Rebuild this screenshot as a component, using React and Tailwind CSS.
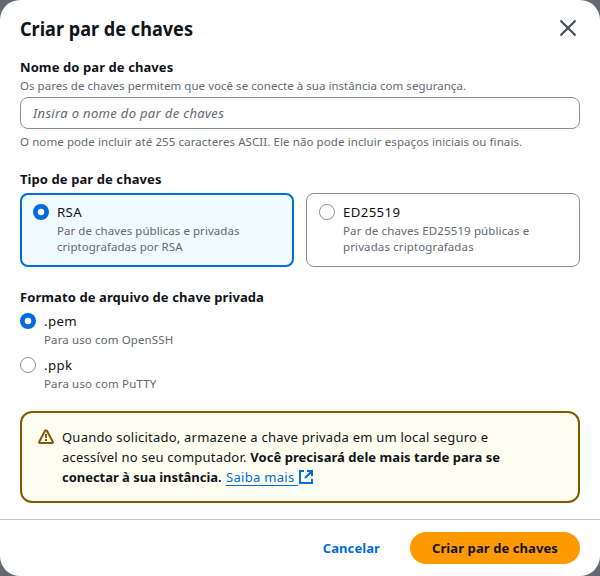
import React from "react";

function Radio({ checked }) {
  return (
    <svg className="mt-0.5 size-4 shrink-0" viewBox="0 0 100 100">
      {checked ? (
        <>
          <circle cx="50" cy="50" r="50" fill="#006ce0" />
          <circle cx="50" cy="50" r="20" fill="#fff" />
        </>
      ) : (
        <circle cx="50" cy="50" r="47" fill="#fff" stroke="#8c8c94" strokeWidth="6" />
      )}
    </svg>
  );
}

function Hint({ children, tracking = "tracking-[0.05px]" }) {
  return <div className={`-mb-px pt-px text-[11.5px] leading-4 text-[#656871] ${tracking}`}>{children}</div>;
}

function Label({ children }) {
  return <div className="font-bold tracking-[0.09px]">{children}</div>;
}

function Option({ checked, label, lines, tracking }) {
  return (
    <div className="flex gap-2">
      <Radio checked={checked} />
      <div className="whitespace-nowrap">
        <div className="text-[13.25px] tracking-[0.35px]">{label}</div>
        {lines.map((line) => (
          <Hint key={line} tracking={tracking}>{line}</Hint>
        ))}
      </div>
    </div>
  );
}

export default function App() {
  return (
    <div className="h-[576px] w-[600px] overflow-hidden bg-[#656871] font-['Noto_Sans',sans-serif] text-[13px] leading-5 tracking-[0.22px] text-[#0f141a]">
      <div className="flex h-full flex-col rounded-[20px] bg-white">
        <header className="flex h-[57px] items-start justify-between px-5 pt-[17px]">
          <h1 className="origin-left scale-x-[0.905] text-[20px] leading-6 font-bold tracking-normal whitespace-nowrap">Criar par de chaves</h1>
          <button className="mr-1 mt-[3px]" aria-label="Fechar">
            <svg className="size-4" viewBox="0 0 16 16" fill="none" stroke="#424650" strokeWidth="2">
              <path d="M.5.5l15 15M15.5.5l-15 15" />
            </svg>
          </button>
        </header>
        <main className="px-5 whitespace-nowrap">
          <Label>Nome do par de chaves</Label>
          <Hint tracking="tracking-[0.035px]">Os pares de chaves permitem que você se conecte à sua instância com segurança.</Hint>
          <div className="my-1 flex h-8 items-center rounded-lg border border-[#8c8c94] px-3 italic tracking-[0.33px] text-[#656871]">Insira o nome do par de chaves</div>
          <Hint tracking="tracking-[0.09px]">O nome pode incluir até 255 caracteres ASCII. Ele não pode incluir espaços iniciais ou finais.</Hint>

          <div className="mt-5">
            <Label>Tipo de par de chaves</Label>
          </div>
          <div className="mt-1 grid grid-cols-2 gap-3">
            <div className="h-[74px] rounded-lg border-2 border-[#006ce0] bg-[#f0fbff] px-[11px] py-[7px]">
              <Option checked label="RSA" lines={["Par de chaves públicas e privadas", "criptografadas por RSA"]} />
            </div>
            <div className="h-[74px] rounded-lg border border-[#8c8c94] px-3 py-2">
              <Option label="ED25519" tracking="tracking-[0.12px]" lines={["Par de chaves ED25519 públicas e", "privadas criptografadas"]} />
            </div>
          </div>

          <div className="mt-5">
            <Label>Formato de arquivo de chave privada</Label>
          </div>
          <div className="mt-1 flex flex-col gap-2">
            <Option checked label=".pem" tracking="tracking-[0.12px]" lines={["Para uso com OpenSSH"]} />
            <Option label=".ppk" tracking="tracking-[0.15px]" lines={["Para uso com PuTTY"]} />
          </div>

          <div className="mt-5 flex h-[92px] gap-2 rounded-xl border-2 border-[#855900] bg-[#fffef0] px-4 py-[14px]">
            <svg className="mt-0.5 size-4 shrink-0" viewBox="0 0 16 16" fill="none" stroke="#855900" strokeWidth="2" strokeLinejoin="round">
              <path d="M7.2 1.5h1.6L15 13.2l-.5.8h-13l-.5-.8L7.2 1.5Z" />
              <path d="M8 5v4M8 10v2" />
            </svg>
            <div>
              <div>Quando solicitado, armazene a chave privada em um local seguro e</div>
              <div>acessível no seu computador. <b className="tracking-[0.05px]">Você precisará dele mais tarde para se</b></div>
              <div className="flex">
                <b className="w-[164px] tracking-[-0.03px]">conectar à sua instância.</b>
                <a className="flex h-[19px] w-[72px] border-b border-[#006ce0] tracking-[0.3px] text-[#006ce0]">Saiba mais</a>
                <svg className="mt-0.5 size-4" viewBox="0 0 16 16" fill="none" stroke="#006ce0" strokeWidth="2">
                  <path d="M9 2h5v5M7 9l7-7M14 10v4H2V2h4" />
                </svg>
              </div>
            </div>
          </div>
        </main>
        <footer className="mt-4 flex h-[57px] items-start justify-end border-t border-[#c6c6cd] px-5 pt-3 font-bold tracking-[0.09px]">
          <button className="mr-[30px] h-8 text-[#006ce0]">Cancelar</button>
          <button className="h-8 w-[170px] rounded-full bg-[#ff9900] whitespace-nowrap">Criar par de chaves</button>
        </footer>
      </div>
    </div>
  );
}
